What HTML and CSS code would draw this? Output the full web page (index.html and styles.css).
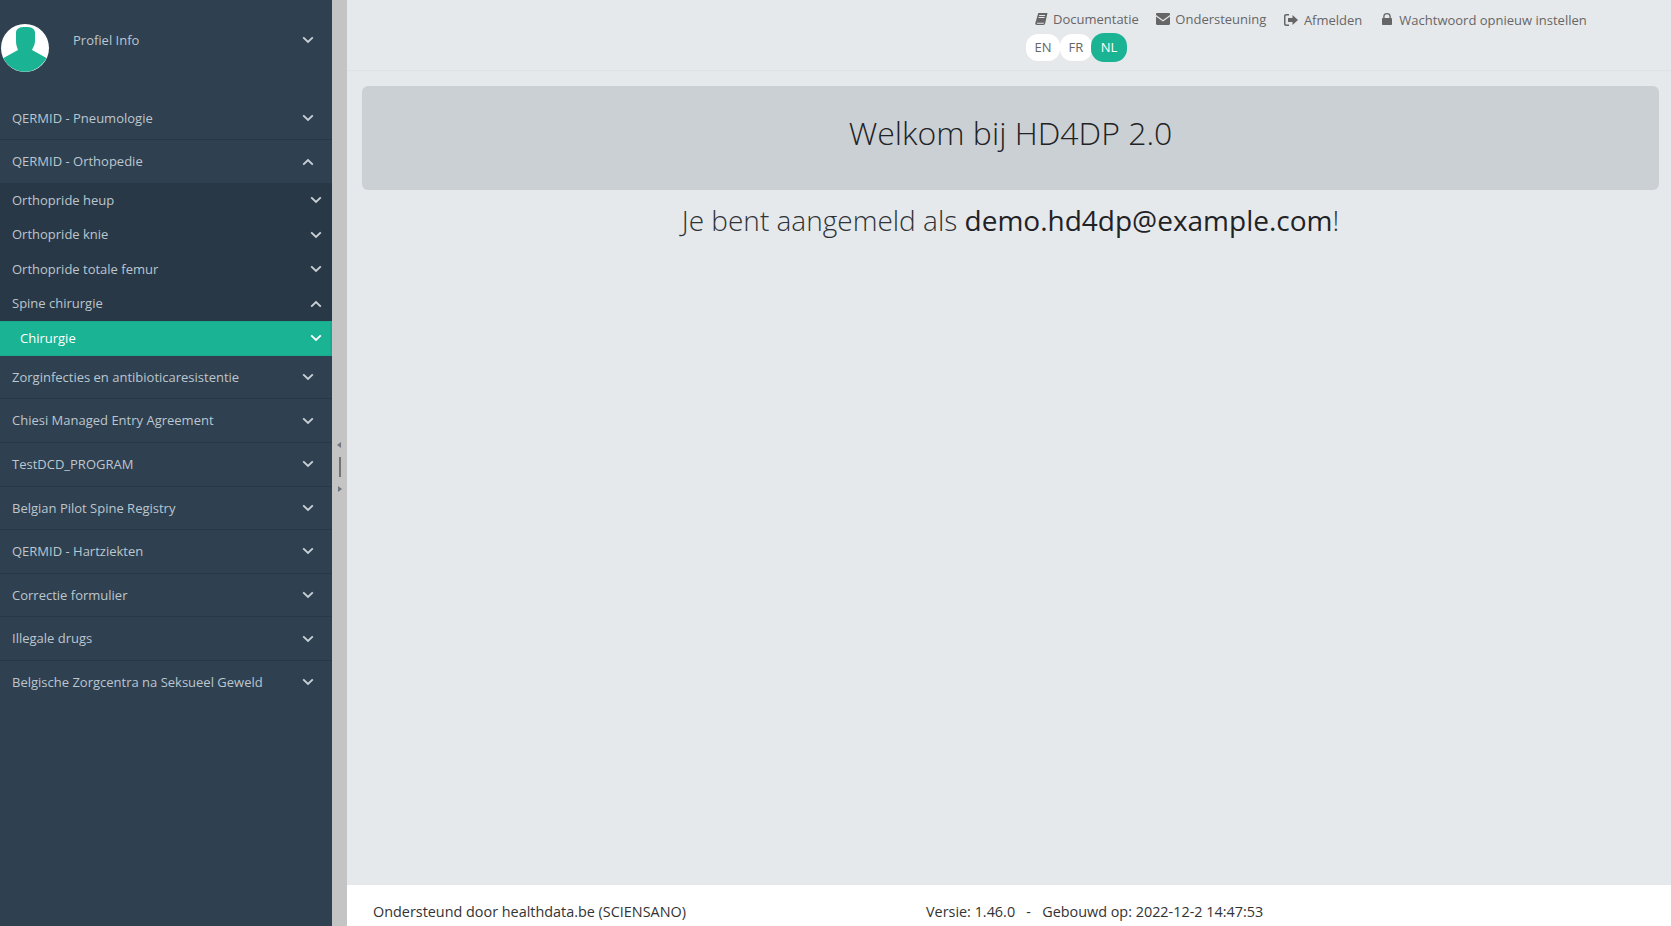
FILE: index.html
```html
<!DOCTYPE html>
<html lang="nl">
<head>
<meta charset="utf-8">
<title>HD4DP 2.0</title>
<link rel="stylesheet" href="styles.css">
</head>
<body>
<svg class="defs" width="0" height="0">
  <symbol id="down" viewBox="0 0 12 8"><path d="M1.2 1.4 6 6 10.8 1.4" fill="none" stroke="currentColor" stroke-width="1.9"/></symbol>
  <symbol id="up" viewBox="0 0 12 8"><path d="M1.2 6.6 6 2 10.8 6.6" fill="none" stroke="currentColor" stroke-width="1.9"/></symbol>
</svg>
<div class="layout">
  <aside class="sidebar">
    <div class="profile">
      <svg class="avatar" viewBox="0 0 48 48">
        <circle cx="24" cy="24" r="24" fill="#fff"/>
        <path d="M15 9C15 4 19 3 24.500 3S34 4 34 9V17C34 21 32 23 31 26L45.500 34C41 42 33 47.800 24 47.800S6 42 2.500 34L17 26C16 23 15 21 15 17Z" fill="#1ab394"/>
      </svg>
      <span class="profile-name">Profiel Info</span>
      <svg class="chev"><use href="#down"/></svg>
    </div>
    <nav class="menu">
      <a class="item"><span>QERMID - Pneumologie</span><svg class="chev"><use href="#down"/></svg></a>
      <a class="item open"><span>QERMID - Orthopedie</span><svg class="chev"><use href="#up"/></svg></a>
      <div class="submenu">
        <a class="sub"><span>Orthopride heup</span><svg class="chev"><use href="#down"/></svg></a>
        <a class="sub"><span>Orthopride knie</span><svg class="chev"><use href="#down"/></svg></a>
        <a class="sub"><span>Orthopride totale femur</span><svg class="chev"><use href="#down"/></svg></a>
        <a class="sub"><span>Spine chirurgie</span><svg class="chev"><use href="#up"/></svg></a>
        <a class="sub active"><span>Chirurgie</span><svg class="chev"><use href="#down"/></svg></a>
      </div>
      <a class="item"><span>Zorginfecties en antibioticaresistentie</span><svg class="chev"><use href="#down"/></svg></a>
      <a class="item"><span>Chiesi Managed Entry Agreement</span><svg class="chev"><use href="#down"/></svg></a>
      <a class="item"><span>TestDCD_PROGRAM</span><svg class="chev"><use href="#down"/></svg></a>
      <a class="item"><span>Belgian Pilot Spine Registry</span><svg class="chev"><use href="#down"/></svg></a>
      <a class="item"><span>QERMID - Hartziekten</span><svg class="chev"><use href="#down"/></svg></a>
      <a class="item"><span>Correctie formulier</span><svg class="chev"><use href="#down"/></svg></a>
      <a class="item"><span>Illegale drugs</span><svg class="chev"><use href="#down"/></svg></a>
      <a class="item plain"><span>Belgische Zorgcentra na Seksueel Geweld</span><svg class="chev"><use href="#down"/></svg></a>
    </nav>
  </aside>
  <div class="gutter">
    <i class="arrow left"></i>
    <i class="handle"></i>
    <i class="arrow right"></i>
  </div>
  <div class="content">
    <header class="topbar">
      <div class="links">
        <a class="link"><svg class="ico book" viewBox="0 0 14 13"><path d="M3.500 0H13.500L11 11.200C10.800 12.300 10.100 13 9 13H2C.8 13 0 12 .3 10.800ZM4.600 2.200 4.300 3.200H10.700L11 2.200ZM4 4.400 3.700 5.400H10.100L10.400 4.400ZM2.200 10.500C1.900 11.300 2.300 11.700 3 11.700H9.300L9.700 10.500Z" fill="#666" fill-rule="evenodd"/></svg>Documentatie</a>
        <a class="link"><svg class="ico" viewBox="0 0 14 12"><path d="M0 1.200C0 .5.500 0 1.200 0H12.800C13.500 0 14 .5 14 1.200V2L7 7 0 2ZM0 3.600 7 8.500 14 3.600V10.800C14 11.500 13.500 12 12.800 12H1.200C.5 12 0 11.500 0 10.800Z" fill="#666"/></svg>Ondersteuning</a>
        <a class="link low"><svg class="ico out" viewBox="0 0 14 12"><path d="M5 0H2C.9 0 0 .9 0 2V10C0 11.100.9 12 2 12H5V10.500H2.300C1.800 10.500 1.500 10.200 1.500 9.700V2.300C1.500 1.800 1.800 1.500 2.300 1.500H5ZM8.500 1 14 6 8.500 11V8H4V4H8.500Z" fill="#666"/></svg>Afmelden</a>
        <a class="link low last"><svg class="ico lock" viewBox="0 0 10 12"><path d="M2.600 5V3.400C2.600 2 3.600 1.300 5 1.300S7.400 2 7.400 3.400V5ZM1.200 5V3.400C1.200 1.200 2.800 0 5 0S8.800 1.200 8.800 3.400V5H9.200C9.700 5 10 5.300 10 5.800V11.200C10 11.700 9.700 12 9.200 12H.8C.3 12 0 11.700 0 11.200V5.800C0 5.300.3 5 .8 5Z" fill="#666" fill-rule="evenodd"/></svg>Wachtwoord opnieuw instellen</a>
      </div>
      <div class="langs">
        <a class="lang">EN</a>
        <a class="lang">FR</a>
        <a class="lang current">NL</a>
      </div>
    </header>
    <main class="main">
      <section class="jumbo"><h1>Welkom bij HD4DP 2.0</h1></section>
      <h2 class="welcome">Je bent aangemeld als <strong>demo.hd4dp@example.com</strong>!</h2>
    </main>
    <footer class="footer">
      <span class="powered">Ondersteund door healthdata.be (SCIENSANO)</span>
      <span class="version">Versie: 1.46.0 &nbsp;&nbsp;-&nbsp;&nbsp; Gebouwd op: 2022-12-2 14:47:53</span>
    </footer>
  </div>
</div>
</body>
</html>
```
FILE: styles.css
```css
* { box-sizing: border-box; }
html, body { height: 100%; }
body {
  margin: 0;
  font-family: "Open Sans", "Noto Sans", sans-serif;
  font-size: 13px;
  line-height: 1.42857;
  color: #676a6c;
  overflow: hidden;
}
.defs { position: absolute; }
.layout { display: flex; height: 926px; }

.sidebar { width: 332px; flex: none; background: #2f4050; color: #bcc6cf; }
.profile { display: flex; align-items: center; height: 96.6px; padding: 0 18px 0 1px; }
.avatar { width: 48px; height: 48px; flex: none; margin-top: -1px; }
.profile-name { margin-left: 24px; flex: 1; margin-top: -17px; }
.profile .chev { margin-top: -16px; }
.chev { width: 12px; height: 8px; flex: none; color: #c8d0d6; }

.item, .sub { display: flex; align-items: center; justify-content: space-between; }
.item { padding: 12px 18px 12px 12px; border-bottom: 1px solid #293846; }
.item.open { border-bottom: 0; }
.item.open .chev { margin-top: 2px; }
.item.plain { border-bottom: 0; }
.submenu { background: #293846; }
.sub { padding: 8px 10px 8px 12px; }
.sub.active {
  padding: 7.2px 8px 7.2px 20px;
  background: #1ab394;
  color: #fff;
  border: solid #19a98c;
  border-width: 1px 2px 1px 0;
}
.sub.active .chev { color: #fff; }

.gutter {
  width: 15px;
  flex: none;
  background: #c4c4c4;
  display: flex;
  flex-direction: column;
  align-items: center;
  justify-content: center;
  gap: 9px;
  padding-top: 7px;
}
.arrow { width: 0; height: 0; border: 3px solid transparent; }
.arrow.left { border-left: 0; border-right: 4px solid #6f7680; margin-right: 1px; }
.arrow.right { border-right: 0; border-left: 4px solid #6f7680; margin-left: 1px; }
.handle { width: 2px; height: 20px; background: #737373; }

.content { flex: 1; min-width: 0; display: flex; flex-direction: column; background: #e6e9ec; }
.topbar {
  height: 71px;
  border-bottom: 1px solid #dfe3e7;
  padding: 9px 0 0 688px;
  color: #666;
}
.links { display: flex; gap: 17.5px; height: 20px; }
.link { display: flex; align-items: center; white-space: nowrap; }
.link.low { padding-top: 2px; }
.link.last { margin-left: 2px; }
.ico { width: 14px; height: 12px; margin-right: 5px; flex: none; }
.ico.book { width: 13px; }
.ico.out { margin-right: 6px; }
.ico.lock { width: 10px; margin: 0 7.5px 2px 0; }
.langs { display: flex; margin: 4px 0 0 -9px; align-items: center; }
.lang {
  height: 27px;
  line-height: 27px;
  padding: 0 8.5px;
  border-radius: 12px;
  background: #fff;
  text-align: center;
}
.lang.current {
  height: 29px;
  line-height: 29px;
  padding: 0 10px;
  background: #1ab394;
  color: #fff;
  border-radius: 13px;
  margin-left: -1px;
}

.main { flex: 1; min-height: 0; padding: 15px 12px 0 15px; text-align: center; color: #2f3336; }
.jumbo {
  height: 104px;
  background: #cbd0d4;
  border-radius: 6px;
  padding-top: 25px;
}
.jumbo h1 { margin: 0; font-size: 32px; font-weight: 300; line-height: 44px; color: #1f2326; }
.welcome { margin: 10px 0 0; font-size: 28px; font-weight: 300; line-height: 40px; color: #2f3336; }
.welcome strong { font-weight: 400; color: #1f2326; }

.footer {
  height: 41px;
  flex: none;
  background: #fff;
  display: flex;
  align-items: flex-end;
  padding: 0 0 3px 26px;
  font-size: 14.4px;
  color: #333;
}
.powered { width: 553px; }
```
